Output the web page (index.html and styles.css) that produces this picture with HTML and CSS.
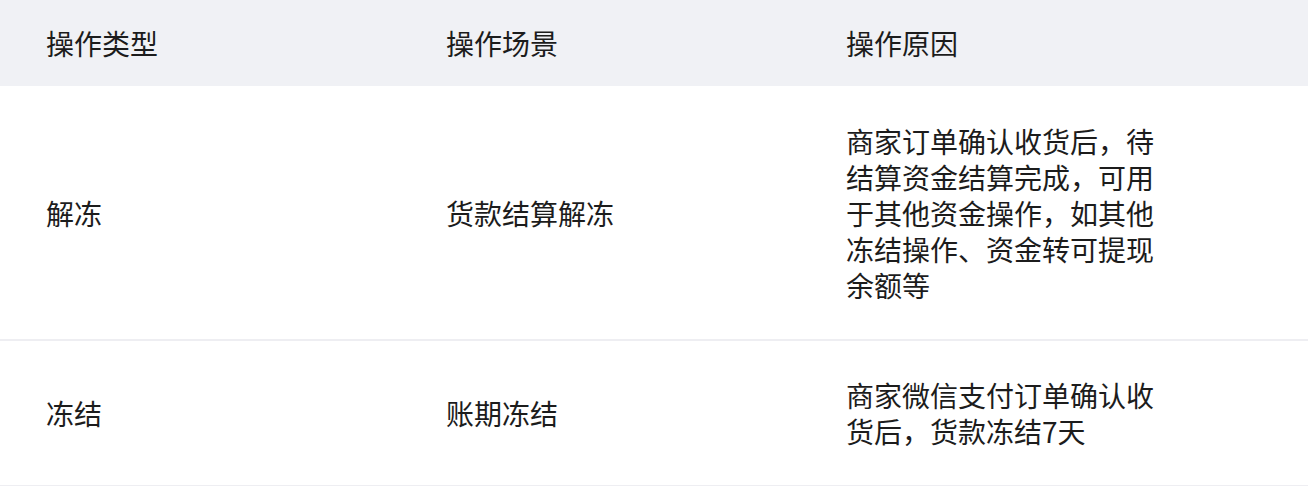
FILE: index.html
```html
<!DOCTYPE html>
<html lang="zh-CN">
<head>
<meta charset="utf-8">
<link rel="stylesheet" href="styles.css">
</head>
<body>
<div class="table">
  <div class="row head">
    <div class="cell">操作类型</div>
    <div class="cell">操作场景</div>
    <div class="cell">操作原因</div>
  </div>
  <div class="row body">
    <div class="cell">解冻</div>
    <div class="cell">货款结算解冻</div>
    <div class="cell wrap">商家订单确认收货后，待结算资金结算完成，可用于其他资金操作，如其他冻结操作、资金转可提现余额等</div>
  </div>
  <div class="row body">
    <div class="cell">冻结</div>
    <div class="cell">账期冻结</div>
    <div class="cell wrap">商家微信支付订单确认收货后，货款冻结7天</div>
  </div>
</div>
</body>
</html>
```
FILE: styles.css
```css
html, body {
  margin: 0;
  padding: 0;
  background: #ffffff;
}
body {
  font-family: "Noto Sans CJK SC", "Noto Sans", sans-serif;
  font-size: 28px;
  line-height: 36px;
  color: #1c1c1c;
}
.table {
  width: 1308px;
}
.row {
  display: grid;
  grid-template-columns: 400px 400px 1fr;
  align-items: center;
}
.head {
  background: #f0f1f5;
  height: 86px;
}
.body {
  border-bottom: 2px solid #eeeef2;
  padding: 36px 0;
}
.body:nth-child(2) {
  padding-top: 37px;
}
.cell {
  padding-left: 46px;
}
.wrap {
  width: 320px;
}
```
